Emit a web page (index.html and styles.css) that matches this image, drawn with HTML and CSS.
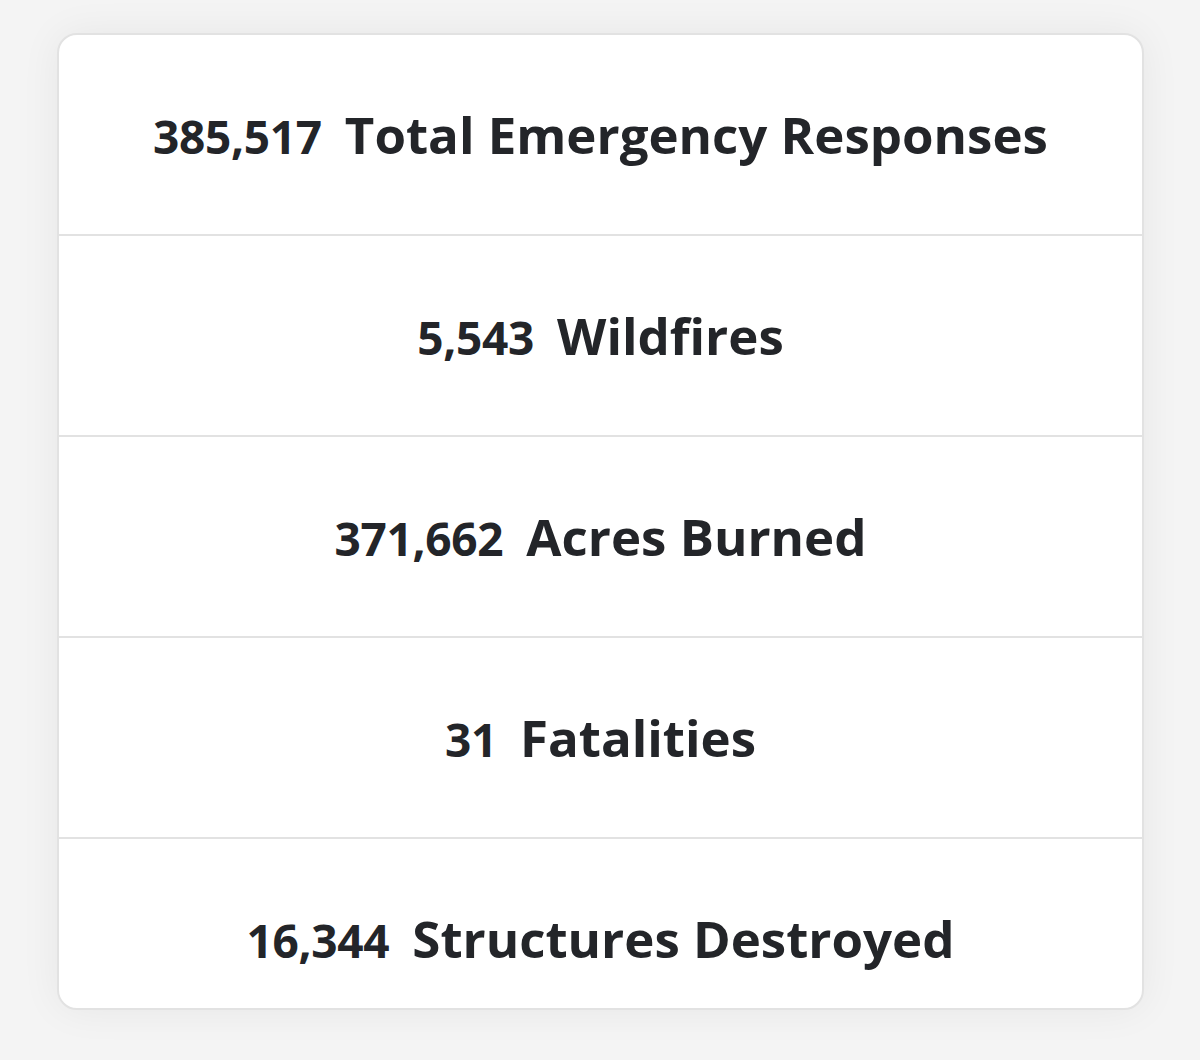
FILE: index.html
```html
<!DOCTYPE html>
<html lang="en">
<head>
<meta charset="utf-8">
<title>Stats</title>
<link rel="stylesheet" href="styles.css">
</head>
<body>
<div class="page">
  <div class="card">
    <div class="row"><span class="num">385,517</span><span class="label">Total Emergency Responses</span></div>
    <div class="row"><span class="num">5,543</span><span class="label">Wildfires</span></div>
    <div class="row"><span class="num">371,662</span><span class="label">Acres Burned</span></div>
    <div class="row"><span class="num">31</span><span class="label">Fatalities</span></div>
    <div class="row last"><span class="num">16,344</span><span class="label">Structures Destroyed</span></div>
  </div>
</div>
</body>
</html>
```
FILE: styles.css
```css
html, body {
  margin: 0;
  padding: 0;
  background: #f4f4f4;
}
body {
  width: 1200px;
  height: 1060px;
  overflow: hidden;
  font-family: "Open Sans", "Liberation Sans", sans-serif;
  color: #232529;
}
.page {
  padding: 33px 56px 0 57px;
}
.card {
  width: 1083px;
  background: #ffffff;
  border: 2px solid #e2e2e2;
  border-radius: 20px;
  box-shadow: 0 0 40px rgba(0, 0, 0, 0.06);
  overflow: hidden;
}
.row {
  box-sizing: border-box;
  height: 201px;
  padding-top: 69px;
  display: flex;
  justify-content: center;
  align-items: baseline;
  gap: 23px;
  border-bottom: 2px solid #e2e2e2;
}
.row.last {
  height: 169px;
  border-bottom: none;
}
.num {
  font-size: 46px;
  font-weight: 700;
  line-height: 1.2;
  letter-spacing: -0.3px;
}
.label {
  font-size: 51px;
  font-weight: 700;
  line-height: 1.2;
  letter-spacing: 0;
}
```
